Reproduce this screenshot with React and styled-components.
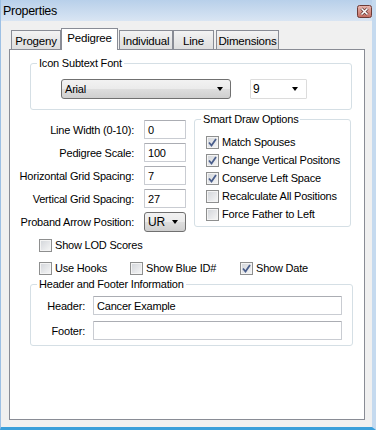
import React from 'react';
import styled, { createGlobalStyle } from 'styled-components';

const Global = createGlobalStyle`
  html, body { margin: 0; padding: 0; background: #f0f0f0; }
  body {
    font-family: "Liberation Sans", Arial, sans-serif;
    font-size: 11px;
    letter-spacing: -0.2px;
    color: #000;
  }
  * { box-sizing: border-box; }
`;

const Window = styled.div`
  width: 376px;
  height: 430px;
  display: flex;
  flex-direction: column;
  background: #f0f0f0;
  border-left: 1px solid #9dc0e4;
  border-right: 4px solid #c5daef;
  border-bottom: 3px solid #3a9fda;
  overflow: hidden;
`;

const TitleBar = styled.div`
  height: 21px;
  flex: none;
  display: flex;
  align-items: center;
  justify-content: space-between;
  padding: 0 0 0 2px;
  background: linear-gradient(#b8d0ea, #d9e5f3);
  font-size: 12.5px;
  letter-spacing: -0.3px;
`;

const CloseBox = styled.svg`
  display: block;
  width: 15px;
  height: 13px;
  margin-top: 2px;
`;

const Body = styled.div`
  flex: 1;
  padding: 7px 0 0 8px;
`;

const TabRow = styled.div`
  display: flex;
  align-items: flex-end;
  height: 21px;
  padding-left: 2px;
`;

const Tab = styled.div`
  position: relative;
  z-index: ${p => (p.$active ? 2 : 0)};
  width: ${p => p.$w}px;
  margin-left: ${p => p.$ml}px;
  height: ${p => (p.$active ? 22 : 19)}px;
  margin-bottom: ${p => (p.$active ? -1 : 0)}px;
  border: 1px solid #898c95;
  border-bottom: none;
  background: ${p => (p.$active ? '#fff' : 'linear-gradient(#f3f3f3, #e6e6e6 60%, #dedede)')};
  display: flex;
  justify-content: center;
  align-items: ${p => (p.$active ? 'flex-start' : 'center')};
  padding-top: ${p => (p.$active ? 3 : 1)}px;
  font-size: 11.5px;
`;

const Panel = styled.div`
  width: 356px;
  height: 371px;
  border: 1px solid #898c95;
  background: #fff;
  display: flex;
  flex-direction: column;
`;

const Group = styled.fieldset`
  margin: ${p => p.$m};
  width: ${p => p.$w}px;
  min-width: 0;
  padding: 0;
  border: 1px solid #d5dfe5;
  border-radius: 3px;
`;

const Legend = styled.legend`
  margin-left: 6px;
  padding: 0 2px;
  line-height: 13px;
`;

const GroupInner = styled.div`
  padding: ${p => p.$pad};
  display: flex;
  flex-direction: ${p => (p.$col ? 'column' : 'row')};
  gap: ${p => p.$gap || 0}px;
`;

const Combo = styled.div`
  width: ${p => p.$w}px;
  height: 20px;
  display: flex;
  align-items: center;
  justify-content: space-between;
  padding: 0 ${p => (p.$flat ? 8 : 7)}px 0 ${p => (p.$flat ? 2 : 3)}px;
  border: 1px solid ${p => (p.$flat ? '#dcdcdc' : '#707070')};
  border-radius: ${p => (p.$flat ? 1 : 3)}px;
  background: ${p => (p.$flat ? '#fff' : 'linear-gradient(#f2f2f2, #ebebeb 48%, #dddddd 52%, #cfcfcf)')};
  font-size: ${p => p.$fs || 11}px;
`;

const Arrow = styled.span`
  width: 0;
  height: 0;
  border-left: 3.5px solid transparent;
  border-right: 3.5px solid transparent;
  border-top: 4px solid #000;
`;

const Middle = styled.div`
  display: flex;
  align-items: flex-start;
`;

const FieldCol = styled.div`
  display: flex;
  flex-direction: column;
  gap: 4px;
  padding-top: 10px;
`;

const FieldRow = styled.div`
  display: grid;
  grid-template-columns: ${p => p.$label}px ${p => p.$input}px;
  column-gap: ${p => p.$gap}px;
  align-items: center;
`;

const Label = styled.span`
  text-align: right;
  white-space: nowrap;
`;

const TextBox = styled.div`
  height: 19px;
  display: flex;
  align-items: center;
  padding-left: 3px;
  background: #fff;
  border: 1px solid #c9ccd2;
  border-top-color: #abadb3;
  border-radius: 1px;
`;

const CheckRow = styled.div`
  display: flex;
  align-items: center;
  height: ${p => p.$h || 18}px;
  margin: ${p => p.$m || 0};
`;

const CheckItem = styled.label`
  display: flex;
  align-items: center;
  gap: 3px;
  width: ${p => (p.$w ? `${p.$w}px` : 'auto')};
  white-space: nowrap;
`;

const Box = styled.span`
  width: 13px;
  height: 13px;
  flex: none;
  border: 1px solid #8e8f8f;
  background: linear-gradient(135deg, #d1d4d9, #f7f7f7);
  box-shadow: inset 0 0 0 1px #f4f4f4;
  display: flex;
  align-items: center;
  justify-content: center;
`;

const Check = ({ on, children, w }) => (
  <CheckItem $w={w}>
    <Box>
      {on && (
        <svg width="9" height="9" viewBox="0 0 9 9">
          <path d="M1 4.5 L3.5 7.5 L8 1" fill="none" stroke="#4a5e8c" strokeWidth="1.8" />
        </svg>
      )}
    </Box>
    <span>{children}</span>
  </CheckItem>
);

const tabs = [
  { t: 'Progeny', w: 50, ml: 0 },
  { t: 'Pedigree', w: 57, ml: 0, active: true },
  { t: 'Individual', w: 54, ml: 1 },
  { t: 'Line', w: 41, ml: 0 },
  { t: 'Dimensions', w: 63, ml: 2 },
];

const fields = [
  ['Line Width (0-10):', '0'],
  ['Pedigree Scale:', '100'],
  ['Horizontal Grid Spacing:', '7'],
  ['Vertical Grid Spacing:', '27'],
];

const smart = [
  ['Match Spouses', true],
  ['Change Vertical Positons', true],
  ['Conserve Left Space', true],
  ['Recalculate All Positions', false],
  ['Force Father to Left', false],
];

export default function App() {
  return (
    <>
      <Global />
      <Window>
        <TitleBar>
          <span>Properties</span>
          <CloseBox viewBox="0 0 15 13">
            <defs>
              <linearGradient id="cg" x1="0" y1="0" x2="0" y2="1">
                <stop offset="0" stopColor="#e9b8b0" />
                <stop offset="1" stopColor="#c46b5f" />
              </linearGradient>
            </defs>
            <rect x="0.5" y="0.5" width="14" height="12" rx="2" fill="url(#cg)" stroke="#6d3b36" />
            <path d="M4.5 3.5 L10.5 9.5 M10.5 3.5 L4.5 9.5" stroke="#5a2e2a" strokeWidth="3" />
            <path d="M4.5 3.5 L10.5 9.5 M10.5 3.5 L4.5 9.5" stroke="#fff" strokeWidth="1.6" />
          </CloseBox>
        </TitleBar>
        <Body>
          <TabRow>
            {tabs.map(tb => (
              <Tab key={tb.t} $w={tb.w} $ml={tb.ml} $active={tb.active}>
                {tb.t}
              </Tab>
            ))}
          </TabRow>
          <Panel>
            <Group $m="7px 0 0 20px" $w={322}>
              <Legend>Icon Subtext Font</Legend>
              <GroupInner $pad="9px 0 10px 30px" $gap={19}>
                <Combo $w={170}>
                  <span>Arial</span>
                  <Arrow />
                </Combo>
                <Combo $w={57} $flat $fs={12}>
                  <span>9</span>
                  <Arrow />
                </Combo>
              </GroupInner>
            </Group>

            <Middle>
              <FieldCol>
                {fields.map(([l, v]) => (
                  <FieldRow key={l} $label={124} $input={42} $gap={10}>
                    <Label>{l}</Label>
                    <TextBox>{v}</TextBox>
                  </FieldRow>
                ))}
                <FieldRow $label={124} $input={42} $gap={10}>
                  <Label>Proband Arrow Position:</Label>
                  <Combo $w={42} $fs={12}>
                    <span>UR</span>
                    <Arrow />
                  </Combo>
                </FieldRow>
              </FieldCol>
              <Group $m="3px 0 0 8px" $w={157}>
                <Legend>Smart Draw Options</Legend>
                <GroupInner $pad="7px 0 3px 11px" $col>
                  {smart.map(([l, on]) => (
                    <CheckRow key={l}>
                      <Check on={on}>{l}</Check>
                    </CheckRow>
                  ))}
                </GroupInner>
              </Group>
            </Middle>

            <CheckRow $h={16} $m="5px 0 0 29px">
              <Check>Show LOD Scores</Check>
            </CheckRow>
            <CheckRow $h={16} $m="7px 0 0 29px">
              <Check w={91}>Use Hooks</Check>
              <Check w={110}>Show Blue ID#</Check>
              <Check on>Show Date</Check>
            </CheckRow>

            <Group $m="2px 0 0 20px" $w={323}>
              <Legend>Header and Footer Information</Legend>
              <GroupInner $pad="5px 0 5px 0" $col $gap={6}>
                <FieldRow $label={54} $input={249} $gap={8}>
                  <Label>Header:</Label>
                  <TextBox>Cancer Example</TextBox>
                </FieldRow>
                <FieldRow $label={54} $input={249} $gap={8}>
                  <Label>Footer:</Label>
                  <TextBox />
                </FieldRow>
              </GroupInner>
            </Group>
          </Panel>
        </Body>
      </Window>
    </>
  );
}
